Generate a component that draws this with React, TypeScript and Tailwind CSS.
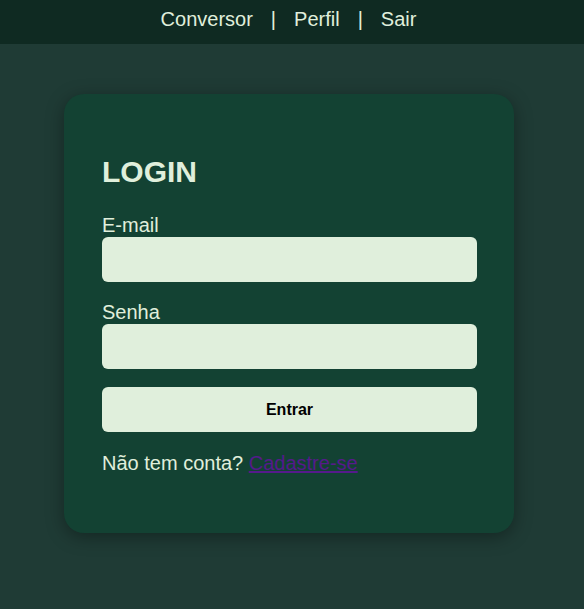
export default function App() {
  return (
    <div className="min-h-[609px] bg-[#1f3b35] font-['Liberation_Sans',Arial,sans-serif] text-[#e0efdc]">

      <nav className="h-[44px] bg-[#0f2a22] flex items-start justify-center gap-[18px] pt-[8px] pr-[7px] text-[20px] leading-[23px]">
        <a className="text-[#e0efdc]">Conversor</a>
        <span>|</span>
        <a className="text-[#e0efdc]">Perfil</a>
        <span>|</span>
        <a className="text-[#e0efdc]">Sair</a>
      </nav>

      <div className="ml-16 mt-[50px] w-[450px] bg-[#134233] rounded-[20px] shadow-[0_4px_18px_rgba(0,0,0,0.35)] pl-[38px] pr-[37px] pt-[61px] pb-[58px]">

        <h1 className="text-[30px] leading-[34px] font-bold mb-[25px]">LOGIN</h1>

        <label className="block text-[20px] leading-[23px]">E-mail</label>
        <input
          type="email"
          className="block w-full h-[45px] rounded-[6px] bg-[#e0efdc] outline-none"
        />

        <label className="block text-[20px] leading-[23px] mt-[19px]">Senha</label>
        <input
          type="password"
          className="block w-full h-[45px] rounded-[6px] bg-[#e0efdc] outline-none"
        />

        <button className="block w-full h-[45px] mt-[18px] rounded-[6px] bg-[#e0efdc] text-black font-bold text-[16px]">
          Entrar
        </button>

        <p className="mt-[20px] text-[20px] leading-[23px]">
          Não tem conta? <a className="text-[#551a8b] underline">Cadastre-se</a>
        </p>

      </div>

    </div>
  )
}
